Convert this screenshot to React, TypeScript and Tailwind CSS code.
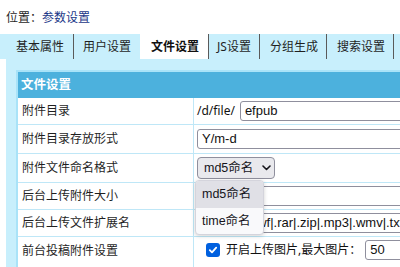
import React from "react";

const font = { fontFamily: '"Noto Sans", "Noto Sans CJK SC", sans-serif' };
const ctl = { fontFamily: '"Liberation Sans", "Noto Sans CJK SC", sans-serif' };

function Row({
  label,
  h,
  children,
  top = false,
}: {
  label: string;
  h: string;
  children?: React.ReactNode;
  top?: boolean;
}) {
  return (
    <div className={`flex border-b border-[#bfe7f7] ${h}`}>
      <div
        className={`w-[176px] shrink-0 border-r border-[#bfe7f7] pl-[4px] flex ${
          top ? "items-start pt-[4px] leading-[20px]" : "items-center"
        }`}
      >
        {label}
      </div>
      <div
        className={`flex-1 pl-[3px] flex ${top ? "items-start pt-[3px]" : "items-center"}`}
      >
        {children}
      </div>
    </div>
  );
}

function TextInput({ value, w = "w-[400px]" }: { value: string; w?: string }) {
  return (
    <div
      className={`${w} h-[20px] border border-[#8f8f9d] rounded-[3px] bg-white pl-[4px] flex items-center text-[13px] text-[#111] whitespace-nowrap overflow-hidden`}
      style={ctl}
    >
      {value}
    </div>
  );
}

export default function App() {
  return (
    <div
      className="w-[400px] h-[267px] overflow-hidden bg-white relative text-[12px] text-[#1f1f1f]"
      style={font}
    >
      <div className="h-[34px] pl-[6px] pt-[10px] leading-[16px]">
        位置：<span className="text-[#1a3788]">参数设置</span>
      </div>

      <div className="h-[25px] bg-[#c8effc] flex pl-[7px] leading-[16px] w-[600px]">
        <div className="px-[9px] pt-[5px] border-r border-[#5a5a5a]">基本属性</div>
        <div className="pl-[9px] pr-[9px] pt-[5px]">用户设置</div>
        <div className="pl-[11px] pr-[9px] pt-[6px] -mt-px h-[26px] bg-white font-bold text-[#111]">
          文件设置
        </div>
        <div className="pl-[8px] pr-[8px] pt-[5px] border-l border-r border-[#5a5a5a]">
          JS设置
        </div>
        <div className="pl-[10px] pr-[8px] pt-[5px] border-r border-[#5a5a5a]">分组生成</div>
        <div className="pl-[10px] pr-[8px] pt-[5px] border-r border-[#5a5a5a]">搜索设置</div>
      </div>

      <div className="ml-[6px] bg-[#c8effc] pt-[11px] pl-[10px] h-[300px]">
        <div className="w-[600px] border-l-2 border-t-2 border-[#a9e3f8] bg-white">
          <div className="h-[26px] bg-[#4cb1dd] text-white font-bold text-[12.5px] pl-[3px] flex items-center">
            文件设置
          </div>
          <Row label="附件目录" h="h-[27px]">
            <span className="text-[#111] mr-[5px]">/d/file/</span>
            <TextInput value="efpub" />
          </Row>
          <Row label="附件目录存放形式" h="h-[29px]">
            <TextInput value="Y/m-d" />
          </Row>
          <Row label="附件文件命名格式" h="h-[29px]">
            <div
              className="w-[78px] h-[22px] bg-[#e9e9ed] border border-[#8f8f9d] rounded-[4px] flex items-center pl-[6px] text-[#15141a] text-[12.5px]"
              style={ctl}
            >
              <span>md5命名</span>
              <svg
                className="ml-[9px]"
                width="9"
                height="6"
                viewBox="0 0 9 6"
                fill="none"
                stroke="#15141a"
                strokeWidth="1.6"
                strokeLinecap="round"
                strokeLinejoin="round"
              >
                <path d="M1 1l3.5 3.5L8 1" />
              </svg>
            </div>
          </Row>
          <Row label="后台上传附件大小" h="h-[27px]">
            <TextInput value="" />
          </Row>
          <Row label="后台上传文件扩展名" h="h-[27px]">
            <TextInput value=".jpg|.gif|.swf|.rar|.zip|.mp3|.wmv|.txt|.doc|.xls" />
          </Row>
          <Row label="前台投稿附件设置" h="h-[40px]" top>
            <div className="flex items-center h-[20px] ml-[9px]">
              <div className="w-[14px] h-[14px] rounded-[3px] bg-[#0060df] flex items-center justify-center">
                <svg width="10" height="10" viewBox="0 0 10 10" fill="none">
                  <path
                    d="M1.8 5.2l2.2 2.2 4.2-4.8"
                    stroke="white"
                    strokeWidth="1.8"
                    strokeLinecap="round"
                    strokeLinejoin="round"
                  />
                </svg>
              </div>
              <span className="ml-[6px] text-[#111]">开启上传图片,最大图片：</span>
              <div className="ml-[4px]">
                <TextInput value="50" w="w-[100px]" />
              </div>
            </div>
          </Row>
        </div>
      </div>

      <div
        className="absolute left-[195px] top-[180px] w-[69px] bg-[#f9f9fb] border border-[#d4d4dc] rounded-[4px] shadow-[0_1px_4px_rgba(0,0,0,0.18)] overflow-hidden text-[#15141a] text-[12.5px]"
        style={ctl}
      >
        <div className="h-[27px] bg-[#e0e0e6] pl-[6px] flex items-center">md5命名</div>
        <div className="h-[26px] pl-[6px] flex items-center">time命名</div>
      </div>
    </div>
  );
}
